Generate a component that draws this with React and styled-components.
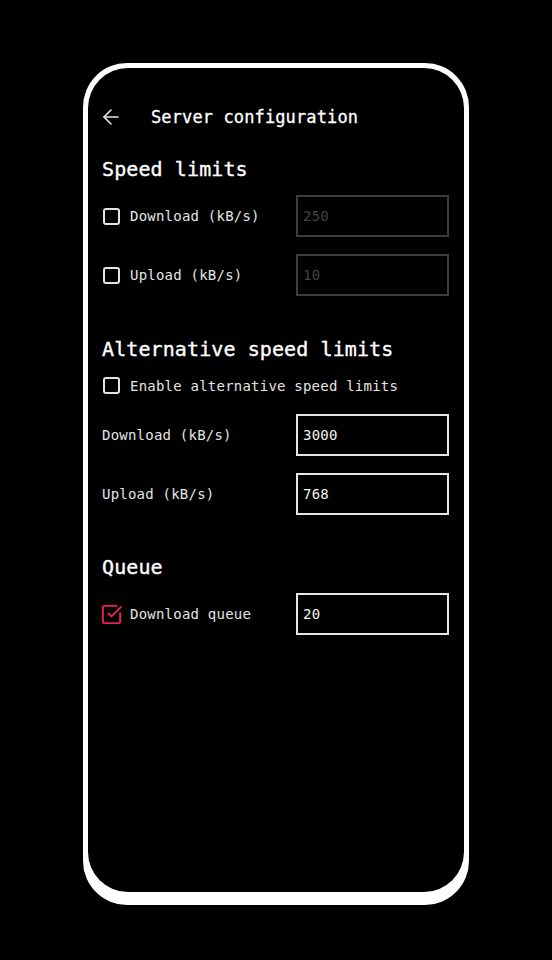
import React from "react";
import styled, { createGlobalStyle } from "styled-components";
import { ArrowLeft, SquareCheckBig } from "lucide-react";

const GlobalStyle = createGlobalStyle`
  html, body { margin: 0; padding: 0; background: #000; }
  body { font-family: "DejaVu Sans Mono", "Liberation Mono", monospace; }
  * { box-sizing: border-box; }
`;

const Page = styled.div`
  width: 552px;
  height: 960px;
  display: flex;
  justify-content: center;
  padding-top: 63px;
  background: #000;
`;

const Phone = styled.div`
  width: 386px;
  height: 842px;
  background: #fff;
  padding: 5px 5px 13px;
  border-radius: 44px;
`;

const Screen = styled.div`
  height: 100%;
  background: #000;
  border-radius: 40px;
  padding: 24px 15px 0 14px;
  display: flex;
  flex-direction: column;
`;

const Header = styled.div`
  height: 50px;
  display: flex;
  align-items: center;
  gap: 28px;
  color: #e6e6e6;
  svg { margin-left: -3px; }
`;

const Title = styled.div`
  font-size: 17px;
  letter-spacing: 0.12px;
  color: #fff;
  -webkit-text-stroke: 0.3px #fff;
`;

const Sections = styled.div`
  margin-top: 11px;
  display: flex;
  flex-direction: column;
  gap: 36.5px;
`;

const Section = styled.section`
  display: flex;
  flex-direction: column;
`;

const Heading = styled.h2`
  margin: 0 0 10px;
  font-size: 20px;
  font-weight: normal;
  line-height: 32px;
  letter-spacing: 0.1px;
  color: #fff;
  -webkit-text-stroke: 0.35px #fff;
`;

const Rows = styled.div`
  display: flex;
  flex-direction: column;
  gap: 17px;
`;

const Row = styled.div`
  display: grid;
  grid-template-columns: ${(p) => (p.$compact ? "1fr" : "1fr 153px")};
  align-items: center;
  min-height: ${(p) => (p.$compact ? "22px" : "42px")};
`;

const Label = styled.label`
  display: flex;
  align-items: center;
  white-space: nowrap;
  font-size: 14px;
  letter-spacing: 0.22px;
  color: #e4e4e4;
`;

const Box = styled.span`
  width: 17px;
  height: 17px;
  margin: 0 10px 0 1px;
  border: 2px solid #e4e4e4;
  border-radius: 3px;
  flex: none;
`;

const Checked = styled.span`
  display: flex;
  margin: 0 7px 0 -2px;
  color: #e91e63;
`;

const Field = styled.input`
  width: 153px;
  height: 42px;
  margin: 0;
  padding: 0 5px;
  background: transparent;
  border: 2px solid ${(p) => (p.disabled ? "#3d3d3d" : "#e6e6e6")};
  border-radius: 0;
  outline: none;
  font-family: inherit;
  font-size: 14px;
  letter-spacing: 0.22px;
  color: ${(p) => (p.disabled ? "#444" : "#f2f2f2")};
  -webkit-text-fill-color: ${(p) => (p.disabled ? "#444" : "#f2f2f2")};
`;

function Check({ checked }) {
  return checked ? (
    <Checked>
      <SquareCheckBig size={23} strokeWidth={2} />
    </Checked>
  ) : (
    <Box />
  );
}

export default function App() {
  return (
    <>
      <GlobalStyle />
      <Page>
        <Phone>
          <Screen>
            <Header>
              <ArrowLeft size={24} strokeWidth={1.6} />
              <Title>Server configuration</Title>
            </Header>
            <Sections>
              <Section>
                <Heading>Speed limits</Heading>
                <Rows>
                  <Row>
                    <Label>
                      <Check />
                      Download (kB/s)
                    </Label>
                    <Field disabled defaultValue="250" />
                  </Row>
                  <Row>
                    <Label>
                      <Check />
                      Upload (kB/s)
                    </Label>
                    <Field disabled defaultValue="10" />
                  </Row>
                </Rows>
              </Section>
              <Section>
                <Heading>Alternative speed limits</Heading>
                <Rows>
                  <Row $compact>
                    <Label>
                      <Check />
                      Enable alternative speed limits
                    </Label>
                  </Row>
                  <Row>
                    <Label>Download (kB/s)</Label>
                    <Field defaultValue="3000" />
                  </Row>
                  <Row>
                    <Label>Upload (kB/s)</Label>
                    <Field defaultValue="768" />
                  </Row>
                </Rows>
              </Section>
              <Section>
                <Heading>Queue</Heading>
                <Rows>
                  <Row>
                    <Label>
                      <Check checked />
                      Download queue
                    </Label>
                    <Field defaultValue="20" />
                  </Row>
                </Rows>
              </Section>
            </Sections>
          </Screen>
        </Phone>
      </Page>
    </>
  );
}
